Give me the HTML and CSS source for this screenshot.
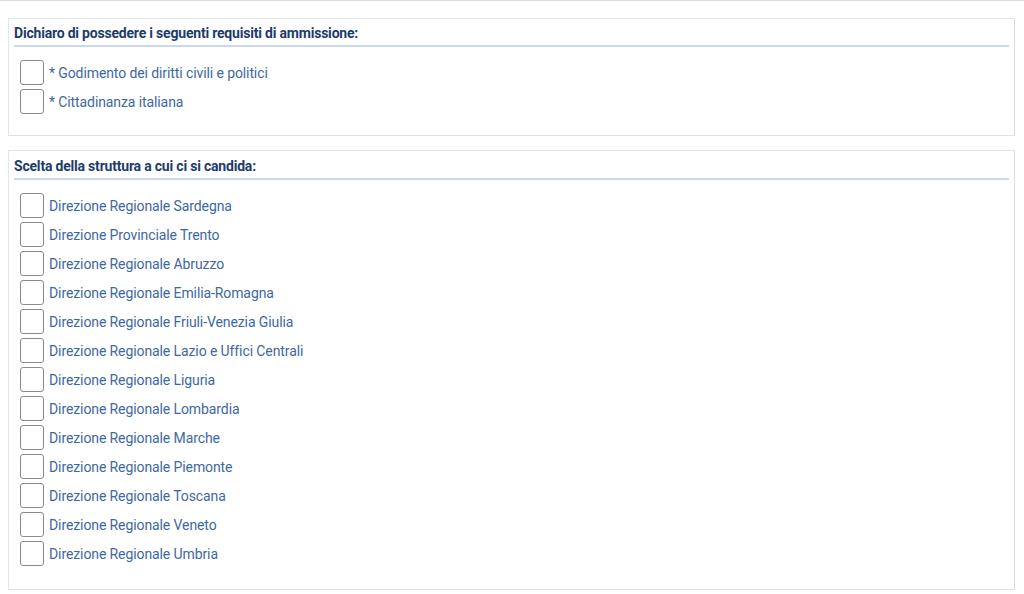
FILE: index.html
```html
<!DOCTYPE html>
<html lang="it">
<head>
<meta charset="utf-8">
<title>Requisiti</title>
<link rel="stylesheet" href="styles.css">
</head>
<body>
<div class="topline"></div>
<section class="panel panel-first">
  <h2 class="panel-title">Dichiaro di possedere i seguenti requisiti di ammissione:</h2>
  <ul class="checks">
    <li class="check"><span class="box"></span><span class="label">* Godimento dei diritti civili e politici</span></li>
    <li class="check"><span class="box"></span><span class="label">* Cittadinanza italiana</span></li>
  </ul>
</section>
<section class="panel panel-second">
  <h2 class="panel-title">Scelta della struttura a cui ci si candida:</h2>
  <ul class="checks">
    <li class="check"><span class="box"></span><span class="label">Direzione Regionale Sardegna</span></li>
    <li class="check"><span class="box"></span><span class="label">Direzione Provinciale Trento</span></li>
    <li class="check"><span class="box"></span><span class="label">Direzione Regionale Abruzzo</span></li>
    <li class="check"><span class="box"></span><span class="label">Direzione Regionale Emilia-Romagna</span></li>
    <li class="check"><span class="box"></span><span class="label">Direzione Regionale Friuli-Venezia Giulia</span></li>
    <li class="check"><span class="box"></span><span class="label">Direzione Regionale Lazio e Uffici Centrali</span></li>
    <li class="check"><span class="box"></span><span class="label">Direzione Regionale Liguria</span></li>
    <li class="check"><span class="box"></span><span class="label">Direzione Regionale Lombardia</span></li>
    <li class="check"><span class="box"></span><span class="label">Direzione Regionale Marche</span></li>
    <li class="check"><span class="box"></span><span class="label">Direzione Regionale Piemonte</span></li>
    <li class="check"><span class="box"></span><span class="label">Direzione Regionale Toscana</span></li>
    <li class="check"><span class="box"></span><span class="label">Direzione Regionale Veneto</span></li>
    <li class="check"><span class="box"></span><span class="label">Direzione Regionale Umbria</span></li>
  </ul>
</section>
</body>
</html>
```
FILE: styles.css
```css
html, body {
  margin: 0;
  padding: 0;
  background: #ffffff;
}
body {
  font-family: Roboto, "Liberation Sans", sans-serif;
  width: 1024px;
}
.topline {
  height: 1px;
  background: #dcdcdc;
}
.panel {
  margin: 0 9px 0 8px;
  border: 1px solid #dfe6ee;
  border-right-color: #d3deea;
  border-bottom-color: #dae3ed;
  padding: 4px 5px 19px 5px;
}
.panel-first {
  margin-top: 17px;
  margin-bottom: 14px;
}
.panel-second {
  padding-top: 5px;
  padding-bottom: 21px;
}
.panel-title {
  margin: 0;
  font-size: 14px;
  font-weight: 700;
  line-height: 20px;
  color: #1c3c6c;
  letter-spacing: -0.2px;
  padding-bottom: 2px;
  border-bottom: 2px solid #c9d8ea;
}
.checks {
  list-style: none;
  margin: 11px 0 0 0;
  padding: 0 0 0 6px;
}
.check {
  display: flex;
  align-items: center;
  gap: 5px;
  height: 29px;
}
.box {
  box-sizing: border-box;
  width: 24px;
  height: 25px;
  border: 1.5px solid #8a8a8a;
  border-radius: 3px;
  background: #fff;
}
.label {
  font-size: 14px;
  color: #3e68a3;
  letter-spacing: -0.1px;
}
```
